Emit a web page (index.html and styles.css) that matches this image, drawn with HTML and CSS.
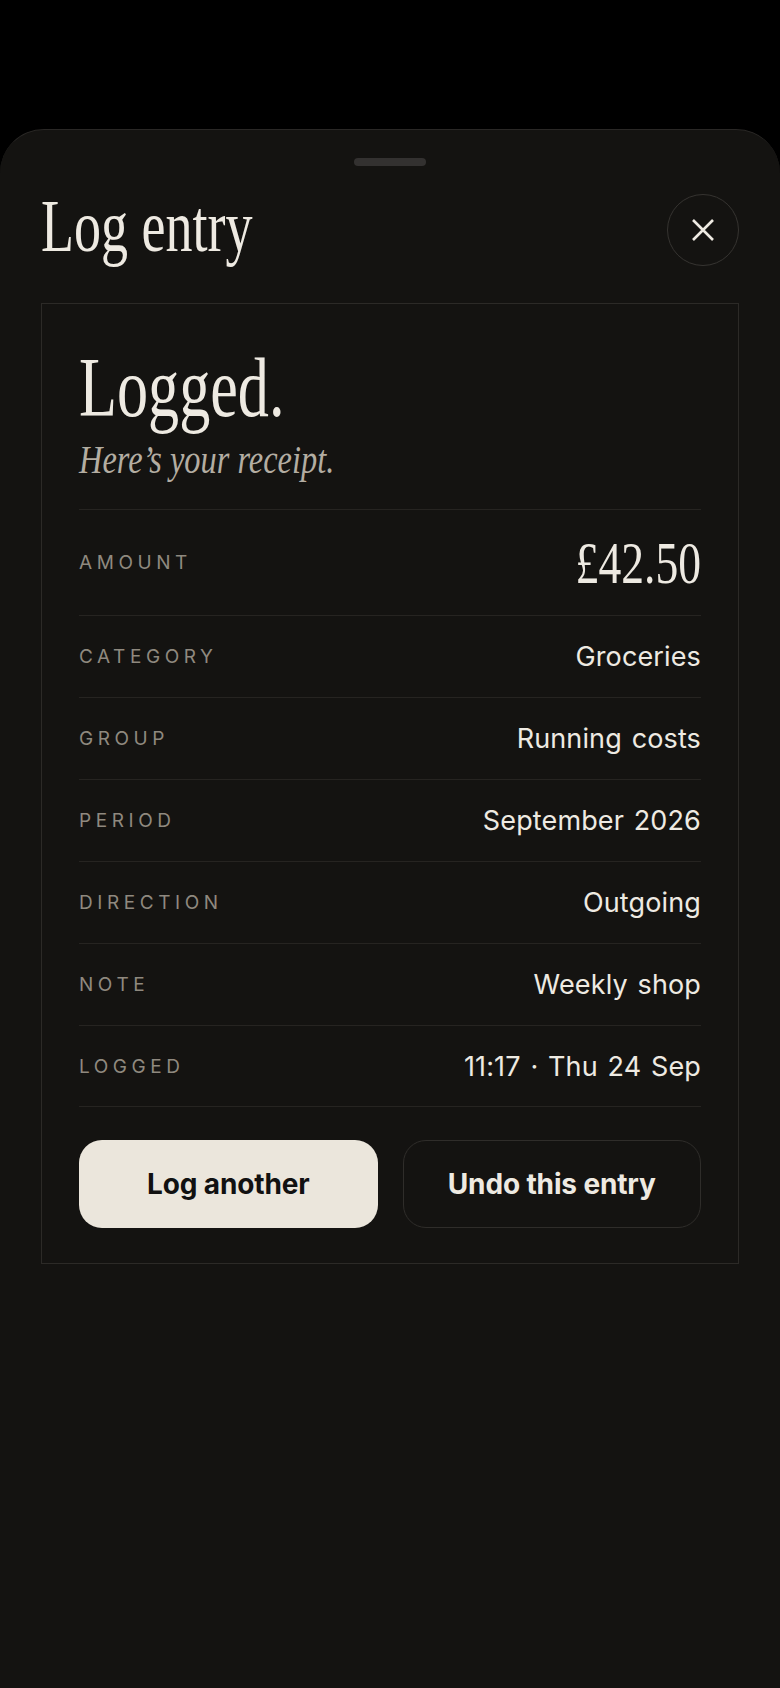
FILE: index.html
```html
<!DOCTYPE html>
<html lang="en">
<head>
<meta charset="utf-8">
<title>Log entry</title>
<link rel="stylesheet" href="styles.css">
</head>
<body>
<div class="sheet">
  <div class="handle"></div>
  <header class="header">
    <h1 class="title"><span class="condensed">Log entry</span></h1>
    <button class="close" aria-label="Close">
      <svg width="24" height="24" viewBox="0 0 24 24"><path d="M2 2 L22 22 M22 2 L2 22" stroke="#eeeae2" stroke-width="2.6" stroke-linecap="butt" fill="none"/></svg>
    </button>
  </header>
  <section class="card">
    <h2 class="logged"><span class="condensed">Logged.</span></h2>
    <p class="sub"><span class="condensed-i">Here’s your receipt.</span></p>
    <div class="rows">
      <div class="row row-amount"><span class="label">Amount</span><span class="amount"><span class="condensed-r">£42.50</span></span></div>
      <div class="row"><span class="label">Category</span><span class="value">Groceries</span></div>
      <div class="row"><span class="label">Group</span><span class="value">Running costs</span></div>
      <div class="row"><span class="label">Period</span><span class="value">September 2026</span></div>
      <div class="row"><span class="label">Direction</span><span class="value">Outgoing</span></div>
      <div class="row"><span class="label">Note</span><span class="value">Weekly shop</span></div>
      <div class="row"><span class="label">Logged</span><span class="value">11:17 · Thu 24 Sep</span></div>
    </div>
    <div class="actions">
      <button class="btn btn-primary">Log another</button>
      <button class="btn btn-ghost">Undo this entry</button>
    </div>
  </section>
</div>
</body>
</html>
```
FILE: styles.css
```css
* { box-sizing: border-box; }
html, body { margin: 0; padding: 0; background: #000; }
body { font-family: Inter, "Liberation Sans", sans-serif; color: #eeeae2; }

.sheet {
  margin-top: 129px;
  min-height: 1559px;
  background: #141311;
  border-top: 1px solid #2a2826;
  border-radius: 44px 44px 0 0;
  padding: 0 41px;
  overflow: hidden;
}
.handle {
  width: 72px;
  height: 8px;
  border-radius: 4px;
  background: #333130;
  margin: 28px auto 0;
}
.header {
  display: flex;
  justify-content: space-between;
  align-items: flex-start;
  height: 72px;
  margin-top: 28px;
}
.title {
  margin: -3px 0 0;
  font-family: "Liberation Serif", serif;
  font-weight: 400;
  font-size: 73px;
  line-height: 72px;
  color: #eeeae2;
}
.condensed, .condensed-i, .condensed-r {
  display: inline-block;
  transform: scaleX(0.74);
  transform-origin: left center;
  white-space: nowrap;
}
.condensed-i { transform: scaleX(0.81); }
.condensed-r { transform: scaleX(0.76); transform-origin: right center; }

.close {
  width: 72px;
  height: 72px;
  border-radius: 50%;
  border: 1.5px solid #363431;
  background: transparent;
  display: flex;
  align-items: center;
  justify-content: center;
  padding: 0;
}
.close svg { display: block; }

.card {
  margin-top: 37px;
  border: 1.5px solid #2c2a27;
  padding: 42px 37px 35px;
}
.logged {
  margin: 0;
  font-family: "Liberation Serif", serif;
  font-weight: 400;
  font-size: 84px;
  line-height: 1;
  color: #eeeae2;
}
.sub {
  margin: 10px 0 0;
  font-family: "Liberation Serif", serif;
  font-style: italic;
  font-size: 40px;
  line-height: 1;
  color: #b3ada2;
}
.rows { margin-top: 29px; }
.row {
  display: flex;
  justify-content: space-between;
  align-items: center;
  height: 82px;
  border-top: 1px solid #262421;
}
.row:last-child { border-bottom: 1px solid #262421; }
.row-amount { height: 106px; }
.label {
  font-size: 19px;
  letter-spacing: 0.24em;
  text-transform: uppercase;
  color: #8f897f;
}
.value {
  font-size: 27px;
  color: #eeeae2;
  letter-spacing: 0.005em;
  word-spacing: 2px;
}
.amount {
  font-family: "Liberation Serif", serif;
  font-size: 60px;
  line-height: 1;
  color: #eeeae2;
}

.actions {
  display: grid;
  grid-template-columns: 1fr 1fr;
  gap: 25px;
  margin-top: 33px;
}
.btn {
  height: 88px;
  border-radius: 23px;
  font-family: Inter, "Liberation Sans", sans-serif;
  font-weight: 700;
  font-size: 28px;
  letter-spacing: -0.005em;
}
.btn-primary {
  background: #ebe6dc;
  color: #111;
  border: none;
}
.btn-ghost {
  background: transparent;
  color: #eeeae2;
  border: 1.5px solid #2f2d2a;
}
```
